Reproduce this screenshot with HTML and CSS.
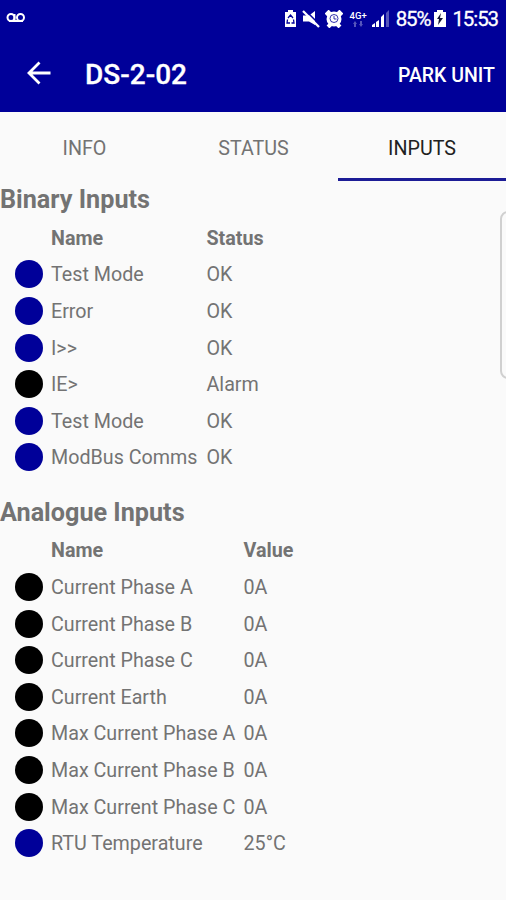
FILE: index.html
```
<!DOCTYPE html>
<html lang="en">
<head>
  <meta charset="UTF-8">
  <meta name="viewport" content="width=device-width, initial-scale=1.0">
  <title>DS-2-02</title>
  <link rel="stylesheet" href="styles.css">
</head>
<body>
  <header class="header">
    <div class="status_bar">
      <svg class="voicemail" width="20" height="12" viewBox="0 0 20 12" fill="none" stroke="#fff" stroke-width="2">
        <circle cx="5" cy="5.5" r="3.5"/>
        <circle cx="14.5" cy="5.5" r="3.5"/>
        <path d="M3 9h14M8.500 2v7"/>
      </svg>
      <div class="status_icons">
        <svg width="13" height="18" viewBox="0 0 13 18">
          <path fill="#fff" d="M1 2h3V0h5v2h3v15H1z"/>
          <path fill="none" stroke="#000099" stroke-width="1.300" d="M4 8l2.500-3L9 8M3.500 9.500L3 13h3M9.500 9.500l.5 3.500H7.500"/>
        </svg>
        <svg width="18" height="18" viewBox="0 0 18 18">
          <path fill="#fff" d="M1 5.500h6L13 1v14L7 11.500H1z"/>
          <path stroke="#000099" stroke-width="1.500" d="M3 0l14 14"/>
          <path stroke="#fff" stroke-width="2.300" d="M1 1l16 16"/>
        </svg>
        <svg width="18" height="18" viewBox="0 0 18 18">
          <path stroke="#fff" stroke-width="4" d="M1 5l4-4M17 5l-4-4M3 17l3-3M15 17l-3-3"/>
          <circle cx="9" cy="9" r="7.500" fill="#fff"/>
          <path fill="none" stroke="#000099" stroke-width=".8" d="M5 8.500a4 4 0 1 0 8 0a4 4 0 0 0-8 0M9 6v3h2.500"/>
        </svg>
        <span class="network">
          <span>4G+</span>
          <svg width="10" height="6" viewBox="0 0 10 6" fill="#5555bb">
            <path d="M0 3l2-3 2 3H3v3H1V3zM6 3h1V0h2v3h1L8 6z"/>
          </svg>
        </span>
        <svg class="signal" width="18" height="17" viewBox="0 0 18 17">
          <path fill="#fff" d="M0 17v-2l3-2v4zM4 17v-5l3-2v7zM9 17V7l3-3v13z"/>
          <path fill="#5555bb" d="M14 17V3l3-3v17z"/>
        </svg>
        <span class="percent">85%</span>
        <svg class="battery" width="12" height="17" viewBox="0 0 12 17">
          <path fill="#fff" d="M0 2h3V0h6v2h3v15H0z"/>
          <path fill="#111133" d="M7 3L3 9h2l-1 6 5-7H6z"/>
        </svg>
        <span class="clock">15:53</span>
      </div>
    </div>
    <div class="toolbar">
      <a class="back" href="#" aria-label="Back">
        <svg width="24" height="24" viewBox="0 0 24 24" fill="none" stroke="#fff" stroke-width="2.800">
          <path d="M23.500 12H2M12.500 1.500L2 12l10.500 10.500"/>
        </svg>
      </a>
      <h1 class="title">DS-2-02</h1>
      <a class="action" href="#">PARK UNIT</a>
    </div>
  </header>

  <nav class="tabs">
    <a class="tab" href="#">INFO</a>
    <a class="tab" href="#">STATUS</a>
    <a class="tab active" href="#">INPUTS</a>
  </nav>

  <main>
    <section class="inputs binary">
      <h2>Binary Inputs</h2>
      <div class="row head"><span></span><span>Name</span><span>Status</span></div>
      <div class="row"><i class="dot"></i><span>Test Mode</span><span>OK</span></div>
      <div class="row"><i class="dot"></i><span>Error</span><span>OK</span></div>
      <div class="row"><i class="dot"></i><span>I&gt;&gt;</span><span>OK</span></div>
      <div class="row"><i class="dot black"></i><span>IE&gt;</span><span>Alarm</span></div>
      <div class="row"><i class="dot"></i><span>Test Mode</span><span>OK</span></div>
      <div class="row"><i class="dot"></i><span>ModBus Comms</span><span>OK</span></div>
    </section>
    <section class="inputs analogue">
      <h2>Analogue Inputs</h2>
      <div class="row head"><span></span><span>Name</span><span>Value</span></div>
      <div class="row"><i class="dot black"></i><span>Current Phase A</span><span>0A</span></div>
      <div class="row"><i class="dot black"></i><span>Current Phase B</span><span>0A</span></div>
      <div class="row"><i class="dot black"></i><span>Current Phase C</span><span>0A</span></div>
      <div class="row"><i class="dot black"></i><span>Current Earth</span><span>0A</span></div>
      <div class="row"><i class="dot black"></i><span>Max Current Phase A</span><span>0A</span></div>
      <div class="row"><i class="dot black"></i><span>Max Current Phase B</span><span>0A</span></div>
      <div class="row"><i class="dot black"></i><span>Max Current Phase C</span><span>0A</span></div>
      <div class="row"><i class="dot"></i><span>RTU Temperature</span><span>25°C</span></div>
    </section>
  </main>
  <div class="edge_handle"></div>
</body>
</html>
```
FILE: styles.css
```
* {
  box-sizing: border-box;
}
body {
  margin: 0;
  height: 900px;
  overflow: hidden;
  position: relative;
  background-color: #fafafa;
  color: #737373;
  font-family: Roboto, Arial, sans-serif;
  font-size: 19.7px;
}
a {
  color: inherit;
  text-decoration: none;
}
svg {
  display: block;
  flex: none;
}
.header {
  height: 112px;
  background-color: #000099;
  color: #fff;
}
.status_bar {
  height: 37px;
  display: flex;
  justify-content: space-between;
  padding: 0 8px 0 6px;
}
.voicemail {
  margin-top: 12px;
}
.status_icons {
  display: flex;
  align-items: center;
  gap: 4px;
}
.status_icons > svg + svg {
  margin-left: 1px;
}
.network {
  display: flex;
  flex-direction: column;
  align-items: center;
  width: 19px;
  margin-left: 2px;
  font-size: 9.5px;
  font-weight: 500;
  line-height: 10px;
}
.percent,
.clock {
  font-size: 20.5px;
  letter-spacing: -1.1px;
  line-height: 37px;
  padding-top: 2px;
  -webkit-text-stroke: 0.3px #fff;
}
.percent {
  margin-left: 2px;
}
.clock {
  margin-left: 2px;
}
.toolbar {
  height: 75px;
  display: flex;
  align-items: center;
  padding: 0 11px 0 27px;
}
.back {
  padding-bottom: 3px;
}
.title {
  margin: 0 0 0 34px;
  font-size: 28px;
  font-weight: 500;
  -webkit-text-stroke: 0.3px #fff;
}
.action {
  margin-left: auto;
  padding-top: 1px;
  font-size: 19.5px;
  font-weight: 500;
}
.tabs {
  height: 69px;
  display: grid;
  grid-template-columns: 169px 169px 1fr;
}
.tab {
  height: 69px;
  border-bottom: 3px solid transparent;
  line-height: 73px;
  text-align: center;
}
.tab.active {
  border-color: #1c1c96;
  color: #212121;
}
.inputs {
  margin-bottom: 18px;
}
.inputs h2 {
  margin: 0;
  height: 38.5px;
  line-height: 37px;
  font-size: 25.2px;
  font-weight: 700;
}
.row {
  height: 36.6px;
  display: grid;
  align-items: center;
  padding-left: 14.5px;
}
.row span {
  padding-top: 1px;
}
.binary .row {
  grid-template-columns: 36.5px 155.5px 1fr;
}
.analogue .row {
  grid-template-columns: 36.5px 192.5px 1fr;
}
.head {
  font-weight: 700;
}
.dot {
  width: 28px;
  height: 28px;
  border-radius: 50%;
  background-color: #000099;
}
.dot.black {
  background-color: #000;
}
/* edge panel handle, runs off the right side of the screen */
.edge_handle {
  position: absolute;
  top: 211px;
  right: -10px;
  width: 16px;
  height: 168px;
  border: 2px solid #d0d0d0;
  border-radius: 8px;
}
```
